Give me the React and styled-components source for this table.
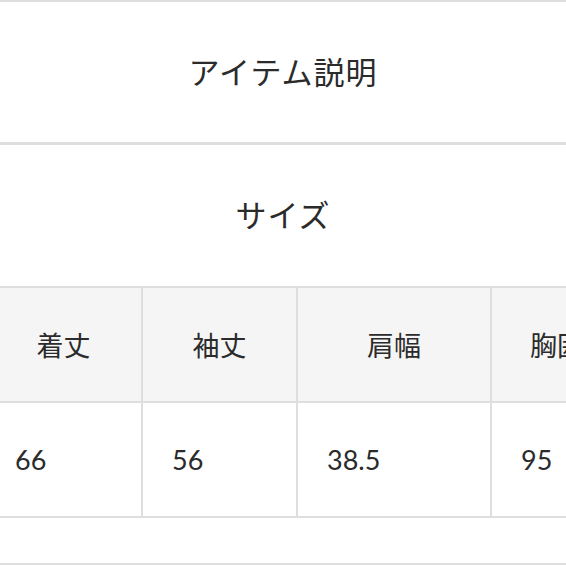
import React from 'react';
import styled, {createGlobalStyle} from 'styled-components'

const GlobalStyle = createGlobalStyle`
  html, body {
    margin: 0;
    padding: 0;
    background: #fff;
    overflow: hidden;
  }
  body {
    font-family: "Noto Sans CJK JP", "Noto Sans", sans-serif;
    color: #2b2b2b;
  }
`;

const Page = styled.div`
  width: 566px;
  height: 566px;
  display: flex;
  flex-direction: column;
  overflow: hidden;
  border-top: 2px solid #dedede;
  box-sizing: border-box;
`;

const Heading = styled.div`
  height: ${props => props.h}px;
  flex-shrink: 0;
  display: flex;
  align-items: center;
  justify-content: center;
  padding-bottom: 4px;
  box-sizing: border-box;
  font-size: 31px;
  font-weight: 400;
  letter-spacing: 1px;
  border-bottom: ${props => props.line ? '3px solid #dedede' : 'none'};
`;

const SizeTable = styled.div`
  display: grid;
  grid-template-columns: 155px 153px 192px 130px;
  grid-template-rows: 113px 113px;
  gap: 2px;
  padding: 2px 0;
  margin-left: -14px;
  width: max-content;
  background: #dedede;
`;

const Cell = styled.div`
  display: flex;
  align-items: center;
  justify-content: ${props => props.head ? 'center' : 'flex-start'};
  padding-left: ${props => props.head ? '0' : '29px'};
  background: ${props => props.head ? '#f5f5f5' : '#fff'};
  font-size: 27px;
  font-family: ${props => props.head
    ? '"Noto Sans CJK JP", "Noto Sans", sans-serif'
    : 'Lato, "Noto Sans", sans-serif'};
  white-space: nowrap;
`;

const Footer = styled.div`
  height: 45px;
  flex-shrink: 0;
  border-bottom: 2px solid #dedede;
`;

const heads = ['着丈', '袖丈', '肩幅', '胸囲'];
const values = ['66', '56', '38.5', '95'];

export default function App() {
  return (
    <>
      <GlobalStyle/>
      <Page>
        <Heading h={143} line>アイテム説明</Heading>
        <Heading h={141}>サイズ</Heading>
        <SizeTable>
          {heads.map(h => <Cell head key={h}>{h}</Cell>)}
          {values.map(v => <Cell key={v}>{v}</Cell>)}
        </SizeTable>
        <Footer/>
      </Page>
    </>
  );
}
